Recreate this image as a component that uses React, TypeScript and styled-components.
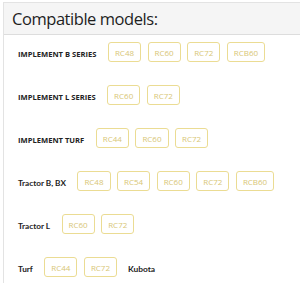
import React from "react";
import styled, { createGlobalStyle } from "styled-components";

const Global = createGlobalStyle`
  html, body { margin: 0; padding: 0; background: #ffffff; }
  body { font-family: "Open Sans", "Liberation Sans", sans-serif; }
`;

const Page = styled.div`
  padding: 2px 0 0 3px;
`;

const Panel = styled.section`
  border: 1px solid #e3e3e3;
  border-right: none;
  background: #fff;
  min-height: 290px;
`;

const Header = styled.div`
  background: #f5f5f5;
  border-bottom: 1px solid #dddddd;
  height: 31px;
  display: flex;
  align-items: center;
  padding-left: 8px;
`;

const Title = styled.h3`
  margin: 0;
  font-family: "Open Sans", "Liberation Sans", sans-serif;
  font-weight: 500;
  font-size: 16.5px;
  letter-spacing: -0.45px;
  color: #1e1e1e;
`;

const Body = styled.div`
  padding: 7px 0 0 14px;
  display: flex;
  flex-direction: column;
  gap: 23px;
`;

const Row = styled.div`
  display: flex;
  align-items: center;
  height: 20px;
`;

const Label = styled.span<{ $upper?: boolean }>`
  font-family: ${(p) => (p.$upper ? '"Open Sans"' : '"Lato"')}, "Liberation Sans", sans-serif;
  font-weight: 700;
  font-size: ${(p) => (p.$upper ? "7.6px" : "8.2px")};
  color: #222;
  padding-top: 4px;
  margin-right: 11.5px;
  white-space: nowrap;
`;

const Badges = styled.div`
  display: flex;
  gap: 6.5px;
`;

const Badge = styled.span`
  display: inline-flex;
  align-items: center;
  justify-content: center;
  box-sizing: border-box;
  height: 20px;
  padding: 0 6px;
  min-width: 31px;
  border: 1px solid #ebdc93;
  border-radius: 3px;
  font-family: "Open Sans", sans-serif;
  font-size: 8px;
  color: #d8c676;
`;

const Brand = styled.span`
  font-family: "Lato", "Open Sans", sans-serif;
  font-weight: 700;
  font-size: 8.4px;
  color: #222;
  padding-top: 4px;
  margin-left: 11px;
`;

type RowData = { label: string; upper?: boolean; models: string[]; brand?: string };

const rows: RowData[] = [
  { label: "IMPLEMENT B SERIES", upper: true, models: ["RC48", "RC60", "RC72", "RCB60"] },
  { label: "IMPLEMENT L SERIES", upper: true, models: ["RC60", "RC72"] },
  { label: "IMPLEMENT TURF", upper: true, models: ["RC44", "RC60", "RC72"] },
  { label: "Tractor B, BX", models: ["RC48", "RC54", "RC60", "RC72", "RCB60"] },
  { label: "Tractor L", models: ["RC60", "RC72"] },
  { label: "Turf", models: ["RC44", "RC72"], brand: "Kubota" },
];

export default function App() {
  return (
    <Page>
      <Global />
      <Panel>
        <Header>
          <Title>Compatible models:</Title>
        </Header>
        <Body>
          {rows.map((r) => (
            <Row key={r.label}>
              <Label $upper={r.upper}>{r.label}</Label>
              <Badges>
                {r.models.map((m) => (
                  <Badge key={m}>{m}</Badge>
                ))}
              </Badges>
              {r.brand && <Brand>{r.brand}</Brand>}
            </Row>
          ))}
        </Body>
      </Panel>
    </Page>
  );
}
